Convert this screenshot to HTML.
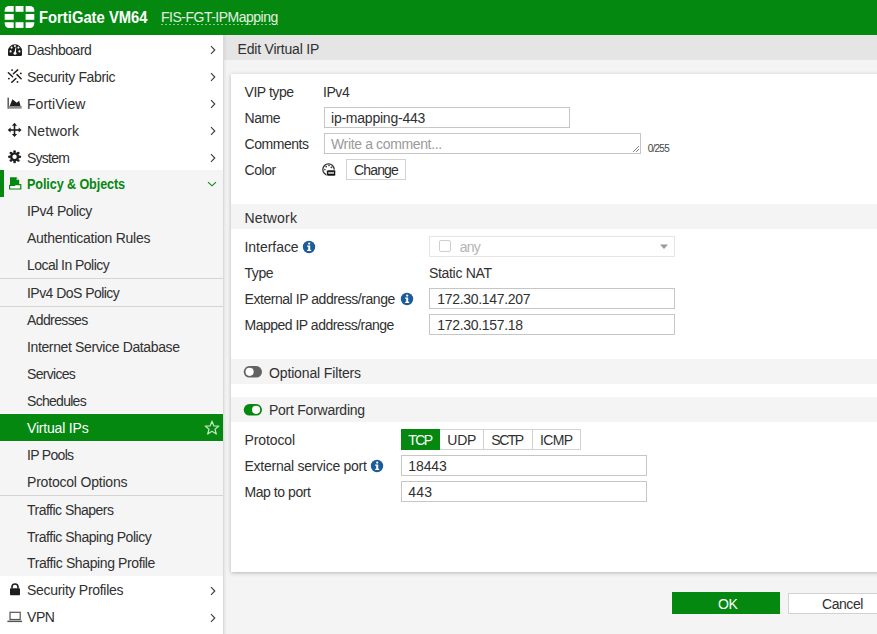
<!DOCTYPE html><html><head><meta charset="utf-8"><style>body{margin:0;width:877px;height:634px;overflow:hidden;position:relative;font-family:'Liberation Sans', sans-serif;}</style></head><body><div style="position:absolute;left:0px;top:0px;width:877px;height:634px;background:#f4f4f4"></div>
<div style="position:absolute;left:0px;top:0px;width:877px;height:35px;background:#04880f"></div>
<svg style="position:absolute;left:0px;top:0px" width="40" height="35" viewBox="0 0 40 35"><g fill="#fff">
<path d="M9 6 H13.7 V11.8 H4.7 V10.3 A4.3 4.3 0 0 1 9 6Z"/>
<rect x="15.5" y="6" width="8" height="5.8"/>
<path d="M25.6 6 H30 A4.3 4.3 0 0 1 34.3 10.3 V11.8 H25.6Z"/>
<rect x="4.7" y="14" width="9" height="5.8"/>
<rect x="25.6" y="14" width="8.7" height="5.8"/>
<path d="M4.7 22.2 H13.7 V27.9 H9 A4.3 4.3 0 0 1 4.7 23.6Z"/>
<rect x="15.5" y="22.2" width="8" height="5.7"/>
<path d="M25.6 22.2 H34.3 V23.6 A4.3 4.3 0 0 1 30 27.9 H25.6Z"/>
</g></svg>
<div style="position:absolute;left:39px;top:10px;font-size:16px;line-height:16px;color:#fff;font-weight:bold;letter-spacing:0px;white-space:nowrap;transform:scaleX(0.925);transform-origin:0 0;">FortiGate VM64</div>
<div style="position:absolute;left:161px;top:10px;font-size:14px;line-height:14px;color:#e3f1e3;font-weight:normal;letter-spacing:-0.5px;white-space:nowrap;">FIS-FGT-IPMapping</div>
<div style="position:absolute;left:161px;top:24px;width:117px;height:1px;background:repeating-linear-gradient(to right,rgba(255,255,255,0.55) 0 2px,transparent 2px 4px)"></div>
<div style="position:absolute;left:0px;top:35px;width:223px;height:599px;background:#fff"></div>
<div style="position:absolute;left:223px;top:35px;width:1px;height:599px;background:#dadada"></div>
<div style="position:absolute;left:0px;top:170px;width:223px;height:406px;background:#f5f5f5"></div>
<div style="position:absolute;left:0px;top:170px;width:4px;height:27px;background:#04880f"></div>
<div style="position:absolute;left:0px;top:278px;width:223px;height:1px;background:#d4d4d4"></div>
<div style="position:absolute;left:0px;top:306px;width:223px;height:1px;background:#d4d4d4"></div>
<div style="position:absolute;left:0px;top:495px;width:223px;height:1px;background:#d4d4d4"></div>
<div style="position:absolute;left:0px;top:413px;width:223px;height:1px;background:#fff"></div>
<div style="position:absolute;left:0px;top:414px;width:223px;height:27px;background:#04880f"></div>
<div style="position:absolute;left:0px;top:441px;width:223px;height:1px;background:#fff"></div>
<div style="position:absolute;left:27px;top:43px;font-size:14px;line-height:14px;color:#303030;font-weight:normal;letter-spacing:-0.45px;white-space:nowrap;">Dashboard</div>
<div style="position:absolute;left:27px;top:70px;font-size:14px;line-height:14px;color:#303030;font-weight:normal;letter-spacing:-0.34px;white-space:nowrap;">Security Fabric</div>
<div style="position:absolute;left:27px;top:97px;font-size:14px;line-height:14px;color:#303030;font-weight:normal;letter-spacing:0.04px;white-space:nowrap;">FortiView</div>
<div style="position:absolute;left:27px;top:124px;font-size:14px;line-height:14px;color:#303030;font-weight:normal;letter-spacing:0.12px;white-space:nowrap;">Network</div>
<div style="position:absolute;left:27px;top:151px;font-size:14px;line-height:14px;color:#303030;font-weight:normal;letter-spacing:-0.77px;white-space:nowrap;">System</div>
<div style="position:absolute;left:27px;top:177px;font-size:14px;line-height:14px;color:#04880f;font-weight:bold;letter-spacing:-0.1px;white-space:nowrap;transform:scaleX(0.9);transform-origin:0 0;">Policy &amp; Objects</div>
<div style="position:absolute;left:27px;top:204px;font-size:14px;line-height:14px;color:#303030;font-weight:normal;letter-spacing:-0.4px;white-space:nowrap;">IPv4 Policy</div>
<div style="position:absolute;left:27px;top:231px;font-size:14px;line-height:14px;color:#303030;font-weight:normal;letter-spacing:-0.26px;white-space:nowrap;">Authentication Rules</div>
<div style="position:absolute;left:27px;top:258px;font-size:14px;line-height:14px;color:#303030;font-weight:normal;letter-spacing:-0.54px;white-space:nowrap;">Local In Policy</div>
<div style="position:absolute;left:27px;top:286px;font-size:14px;line-height:14px;color:#303030;font-weight:normal;letter-spacing:-0.54px;white-space:nowrap;">IPv4 DoS Policy</div>
<div style="position:absolute;left:27px;top:313px;font-size:14px;line-height:14px;color:#303030;font-weight:normal;letter-spacing:-0.61px;white-space:nowrap;">Addresses</div>
<div style="position:absolute;left:27px;top:340px;font-size:14px;line-height:14px;color:#303030;font-weight:normal;letter-spacing:-0.37px;white-space:nowrap;">Internet Service Database</div>
<div style="position:absolute;left:27px;top:367px;font-size:14px;line-height:14px;color:#303030;font-weight:normal;letter-spacing:-0.69px;white-space:nowrap;">Services</div>
<div style="position:absolute;left:27px;top:394px;font-size:14px;line-height:14px;color:#303030;font-weight:normal;letter-spacing:-0.71px;white-space:nowrap;">Schedules</div>
<div style="position:absolute;left:27px;top:448px;font-size:14px;line-height:14px;color:#303030;font-weight:normal;letter-spacing:-0.69px;white-space:nowrap;">IP Pools</div>
<div style="position:absolute;left:27px;top:475px;font-size:14px;line-height:14px;color:#303030;font-weight:normal;letter-spacing:-0.2px;white-space:nowrap;">Protocol Options</div>
<div style="position:absolute;left:27px;top:503px;font-size:14px;line-height:14px;color:#303030;font-weight:normal;letter-spacing:-0.51px;white-space:nowrap;">Traffic Shapers</div>
<div style="position:absolute;left:27px;top:530px;font-size:14px;line-height:14px;color:#303030;font-weight:normal;letter-spacing:-0.47px;white-space:nowrap;">Traffic Shaping Policy</div>
<div style="position:absolute;left:27px;top:556px;font-size:14px;line-height:14px;color:#303030;font-weight:normal;letter-spacing:-0.39px;white-space:nowrap;">Traffic Shaping Profile</div>
<div style="position:absolute;left:27px;top:421px;font-size:14px;line-height:14px;color:#fff;font-weight:normal;letter-spacing:-0.19px;white-space:nowrap;">Virtual IPs</div>
<div style="position:absolute;left:27px;top:583px;font-size:14px;line-height:14px;color:#303030;font-weight:normal;letter-spacing:-0.29px;white-space:nowrap;">Security Profiles</div>
<div style="position:absolute;left:27px;top:610px;font-size:14px;line-height:14px;color:#303030;font-weight:normal;letter-spacing:-0.45px;white-space:nowrap;">VPN</div>
<svg style="position:absolute;left:207px;top:44px" width="12" height="12" viewBox="0 0 12 12"><path d="M4 2.2 L7.8 6 L4 9.8" fill="none" stroke="#3a3a3a" stroke-width="1.1"/></svg>
<svg style="position:absolute;left:207px;top:71px" width="12" height="12" viewBox="0 0 12 12"><path d="M4 2.2 L7.8 6 L4 9.8" fill="none" stroke="#3a3a3a" stroke-width="1.1"/></svg>
<svg style="position:absolute;left:207px;top:98px" width="12" height="12" viewBox="0 0 12 12"><path d="M4 2.2 L7.8 6 L4 9.8" fill="none" stroke="#3a3a3a" stroke-width="1.1"/></svg>
<svg style="position:absolute;left:207px;top:125px" width="12" height="12" viewBox="0 0 12 12"><path d="M4 2.2 L7.8 6 L4 9.8" fill="none" stroke="#3a3a3a" stroke-width="1.1"/></svg>
<svg style="position:absolute;left:207px;top:152px" width="12" height="12" viewBox="0 0 12 12"><path d="M4 2.2 L7.8 6 L4 9.8" fill="none" stroke="#3a3a3a" stroke-width="1.1"/></svg>
<svg style="position:absolute;left:207px;top:585px" width="12" height="12" viewBox="0 0 12 12"><path d="M4 2.2 L7.8 6 L4 9.8" fill="none" stroke="#3a3a3a" stroke-width="1.1"/></svg>
<svg style="position:absolute;left:207px;top:612px" width="12" height="12" viewBox="0 0 12 12"><path d="M4 2.2 L7.8 6 L4 9.8" fill="none" stroke="#3a3a3a" stroke-width="1.1"/></svg>
<svg style="position:absolute;left:205px;top:177px" width="14" height="14" viewBox="0 0 14 14"><path d="M3 5.1 L7 8.8 L11 5.1" fill="none" stroke="#04880f" stroke-width="1.15"/></svg>
<svg style="position:absolute;left:203px;top:419px" width="18" height="17" viewBox="0 0 18 17"><path d="M9 2.2 L10.9 6.9 L15.8 7.1 L12 10.3 L13.3 15 L9 12.3 L4.7 15 L6 10.3 L2.2 7.1 L7.1 6.9Z" fill="none" stroke="rgba(255,255,255,0.75)" stroke-width="1.3" stroke-linejoin="round"/></svg>
<svg style="position:absolute;left:0px;top:35px" width="30" height="27" viewBox="0 0 30 27"><path d="M8 16.2 A7 7 0 0 1 22 16.2 V19.8 Q22 21 20.8 21 H9.2 Q8 21 8 19.8Z" fill="#1e1e1e"/>
<g fill="#fff"><circle cx="10.6" cy="16.4" r="1.05"/><circle cx="11.6" cy="12.6" r="1.05"/><circle cx="14.9" cy="11" r="1.05"/><circle cx="18.4" cy="12.6" r="1.05"/><circle cx="19.4" cy="16.4" r="1.05"/>
<circle cx="15" cy="18.3" r="1.5"/><path d="M14.2 18.2 L15.6 12.3 L16.3 12.4 L15.8 18.4Z"/></g></svg>
<svg style="position:absolute;left:0px;top:62px" width="30" height="27" viewBox="0 0 30 27"><g stroke="#1e1e1e" stroke-width="1.5" stroke-linecap="round" fill="none">
<path d="M13.4 11.7 L17.7 7.9"/><path d="M8.4 10.8 L12.6 14.8"/><path d="M17 12.6 L21.1 16.7"/><path d="M11.8 20.3 L15.9 16.5"/></g>
<g fill="#1e1e1e"><circle cx="12.1" cy="8.1" r="0.95"/><circle cx="20.8" cy="11.4" r="0.95"/><circle cx="8.9" cy="16.6" r="0.95"/><circle cx="17.5" cy="19.9" r="0.95"/></g></svg>
<svg style="position:absolute;left:0px;top:89px" width="30" height="27" viewBox="0 0 30 27"><rect x="7.6" y="8.6" width="1.1" height="11.1" fill="#1e1e1e"/>
<rect x="8.6" y="17" width="13.1" height="2.7" fill="#8a8a8a"/>
<path d="M9.7 17 L12.4 10.2 L16.7 13.8 L19.2 11.8 L20.5 17Z" fill="#1e1e1e"/></svg>
<svg style="position:absolute;left:0px;top:116px" width="30" height="27" viewBox="0 0 30 27"><g fill="#1e1e1e"><rect x="9" y="13.2" width="11" height="1.6"/><rect x="13.7" y="8.5" width="1.6" height="11"/>
<path d="M7.7 14 L10.6 11.4 L10.6 16.6Z"/><path d="M21.6 14 L18.7 11.4 L18.7 16.6Z"/>
<path d="M14.5 6.8 L11.9 9.7 L17.1 9.7Z"/><path d="M14.5 21 L11.9 18.1 L17.1 18.1Z"/></g></svg>
<svg style="position:absolute;left:0px;top:143px" width="30" height="27" viewBox="0 0 30 27"><g fill="#1e1e1e"><circle cx="19.80" cy="13.80" r="1.35"/><circle cx="18.28" cy="17.48" r="1.35"/><circle cx="14.60" cy="19.00" r="1.35"/><circle cx="10.92" cy="17.48" r="1.35"/><circle cx="9.40" cy="13.80" r="1.35"/><circle cx="10.92" cy="10.12" r="1.35"/><circle cx="14.60" cy="8.60" r="1.35"/><circle cx="18.28" cy="10.12" r="1.35"/></g><circle cx="14.6" cy="13.8" r="3.4" fill="none" stroke="#1e1e1e" stroke-width="2.4"/></svg>
<svg style="position:absolute;left:0px;top:170px" width="30" height="27" viewBox="0 0 30 27"><path d="M10 7.3 H16.6 L19.2 9.9 V15 H10Z" fill="#04880f"/><path d="M16.6 7.3 V9.9 H19.2Z" fill="#cfe6cf"/>
<path d="M9.6 15.4 H14.6 L15.6 14.6 H20.8 V19 H9.6Z" fill="#fff" stroke="#04880f" stroke-width="1.2" stroke-linejoin="round"/></svg>
<svg style="position:absolute;left:0px;top:577px" width="30" height="27" viewBox="0 0 30 27"><path d="M12 11.5 V10 A3 3 0 0 1 18 10 V11.5" fill="none" stroke="#1e1e1e" stroke-width="1.6"/>
<rect x="10" y="11.3" width="10" height="6.9" rx="0.8" fill="#1e1e1e"/></svg>
<svg style="position:absolute;left:0px;top:604px" width="30" height="27" viewBox="0 0 30 27"><rect x="10" y="8.3" width="10.2" height="7.2" fill="none" stroke="#555" stroke-width="1.2"/>
<rect x="7.4" y="16.6" width="14.6" height="1.5" fill="#555"/></svg>
<div style="position:absolute;left:224px;top:35px;width:653px;height:25px;background:#e5e5e5"></div>
<div style="position:absolute;left:224px;top:35px;width:3px;height:599px;background:linear-gradient(to right,rgba(0,0,0,0.06),rgba(0,0,0,0))"></div>
<div style="position:absolute;left:237.5px;top:42px;font-size:14px;line-height:14px;color:#303030;font-weight:normal;letter-spacing:-0.2px;white-space:nowrap;">Edit Virtual IP</div>
<div style="position:absolute;left:231px;top:74px;width:660px;height:498px;background:#fff;box-shadow:0 1px 4px rgba(0,0,0,0.26)"></div>
<div style="position:absolute;left:244.5px;top:85px;font-size:14px;line-height:14px;color:#303030;font-weight:normal;letter-spacing:-0.45px;white-space:nowrap;">VIP type</div>
<div style="position:absolute;left:323px;top:85px;font-size:14px;line-height:14px;color:#303030;font-weight:normal;letter-spacing:-0.45px;white-space:nowrap;">IPv4</div>
<div style="position:absolute;left:244.5px;top:111px;font-size:14px;line-height:14px;color:#303030;font-weight:normal;letter-spacing:-0.45px;white-space:nowrap;">Name</div>
<div style="position:absolute;left:324px;top:107px;width:244px;height:19px;background:#fff;border:1px solid #c6c6c6;"></div>
<div style="position:absolute;left:331px;top:111px;font-size:14px;line-height:14px;color:#303030;font-weight:normal;letter-spacing:-0.23px;white-space:nowrap;">ip-mapping-443</div>
<div style="position:absolute;left:244.5px;top:137px;font-size:14px;line-height:14px;color:#303030;font-weight:normal;letter-spacing:-0.45px;white-space:nowrap;">Comments</div>
<div style="position:absolute;left:324px;top:133px;width:315px;height:19px;background:#fff;border:1px solid #c6c6c6;"></div>
<div style="position:absolute;left:331px;top:137px;font-size:14px;line-height:14px;color:#9a9a9a;font-weight:normal;letter-spacing:-0.36px;white-space:nowrap;">Write a comment...</div>
<svg style="position:absolute;left:630px;top:143px" width="10" height="10" viewBox="0 0 10 10"><path d="M9 3 L3 9 M9 6 L6 9" stroke="#777" stroke-width="0.9"/></svg>
<div style="position:absolute;left:647.7px;top:144px;font-size:10px;line-height:10px;color:#444;font-weight:normal;letter-spacing:-0.75px;white-space:nowrap;">0/255</div>
<div style="position:absolute;left:244.5px;top:163px;font-size:14px;line-height:14px;color:#303030;font-weight:normal;letter-spacing:-0.45px;white-space:nowrap;">Color</div>
<svg style="position:absolute;left:320px;top:161px" width="18" height="17" viewBox="0 0 18 17"><circle cx="8.5" cy="8.5" r="5.7" fill="none" stroke="#333" stroke-width="1.3"/>
<circle cx="6.2" cy="5.6" r="0.9" fill="#333"/><circle cx="9" cy="4.6" r="0.8" fill="#333"/><circle cx="11.4" cy="6.3" r="0.9" fill="#333"/><circle cx="4.9" cy="8.6" r="0.8" fill="#333"/>
<rect x="6.6" y="8.9" width="9" height="6.2" rx="1.4" fill="#111" stroke="#fff" stroke-width="0.7"/><rect x="8.2" y="10.9" width="5.8" height="2" fill="#bbb"/></svg>
<div style="position:absolute;left:346px;top:159px;width:58px;height:19px;background:#fff;border:1px solid #d2d2d2;"></div>
<div style="position:absolute;left:354px;top:163px;font-size:14px;line-height:14px;color:#303030;font-weight:normal;letter-spacing:-0.85px;white-space:nowrap;">Change</div>
<div style="position:absolute;left:231px;top:204px;width:646px;height:25px;background:#f4f4f4"></div>
<div style="position:absolute;left:244.5px;top:211px;font-size:14px;line-height:14px;color:#303030;font-weight:normal;letter-spacing:0.18px;white-space:nowrap;">Network</div>
<div style="position:absolute;left:244.5px;top:240px;font-size:14px;line-height:14px;color:#303030;font-weight:normal;letter-spacing:-0.04px;white-space:nowrap;">Interface</div>
<svg style="position:absolute;left:302px;top:240px" width="14" height="14" viewBox="0 0 14 14"><circle cx="7" cy="7" r="6.2" fill="#1c5c98"/><circle cx="7.2" cy="3.6" r="1.15" fill="#fff"/><path d="M5.1 5.5 H8.2 V9.7 H9.2 V10.9 H5.2 V9.7 H6.2 V6.7 H5.1Z" fill="#fff"/></svg>
<div style="position:absolute;left:429px;top:236px;width:244px;height:19px;background:#fff;border:1px solid #e6e6e6;"></div>
<div style="position:absolute;left:439px;top:240px;width:10px;height:10px;border:1px solid #cfcfcf;border-radius:2px;background:#fff"></div>
<div style="position:absolute;left:459.7px;top:240px;font-size:14px;line-height:14px;color:#b4b4b4;font-weight:normal;letter-spacing:-0.7px;white-space:nowrap;">any</div>
<svg style="position:absolute;left:659px;top:243px" width="10" height="7" viewBox="0 0 10 7"><path d="M1 1.5 H9 L5 6Z" fill="#9a9a9a"/></svg>
<div style="position:absolute;left:244.5px;top:266px;font-size:14px;line-height:14px;color:#303030;font-weight:normal;letter-spacing:-0.45px;white-space:nowrap;">Type</div>
<div style="position:absolute;left:429px;top:266px;font-size:14px;line-height:14px;color:#303030;font-weight:normal;letter-spacing:-0.32px;white-space:nowrap;">Static NAT</div>
<div style="position:absolute;left:244.5px;top:292px;font-size:14px;line-height:14px;color:#303030;font-weight:normal;letter-spacing:-0.45px;white-space:nowrap;">External IP address/range</div>
<svg style="position:absolute;left:400px;top:292px" width="14" height="14" viewBox="0 0 14 14"><circle cx="7" cy="7" r="6.2" fill="#1c5c98"/><circle cx="7.2" cy="3.6" r="1.15" fill="#fff"/><path d="M5.1 5.5 H8.2 V9.7 H9.2 V10.9 H5.2 V9.7 H6.2 V6.7 H5.1Z" fill="#fff"/></svg>
<div style="position:absolute;left:429px;top:288px;width:244px;height:19px;background:#fff;border:1px solid #c6c6c6;"></div>
<div style="position:absolute;left:437.3px;top:292px;font-size:14px;line-height:14px;color:#303030;font-weight:normal;letter-spacing:-0.32px;white-space:nowrap;">172.30.147.207</div>
<div style="position:absolute;left:244.5px;top:318px;font-size:14px;line-height:14px;color:#303030;font-weight:normal;letter-spacing:-0.5px;white-space:nowrap;">Mapped IP address/range</div>
<div style="position:absolute;left:429px;top:314px;width:244px;height:19px;background:#fff;border:1px solid #c6c6c6;"></div>
<div style="position:absolute;left:437.3px;top:318px;font-size:14px;line-height:14px;color:#303030;font-weight:normal;letter-spacing:-0.32px;white-space:nowrap;">172.30.157.18</div>
<div style="position:absolute;left:231px;top:359px;width:646px;height:25px;background:#f4f4f4"></div>
<svg style="position:absolute;left:243px;top:365px" width="20" height="14" viewBox="0 0 20 14"><rect x="0.7" y="1" width="18.3" height="11.6" rx="5.8" fill="#626262"/><circle cx="6.6" cy="6.8" r="4.1" fill="#fff"/></svg>
<div style="position:absolute;left:269px;top:366px;font-size:14px;line-height:14px;color:#303030;font-weight:normal;letter-spacing:-0.14px;white-space:nowrap;">Optional Filters</div>
<div style="position:absolute;left:231px;top:397px;width:646px;height:25px;background:#f4f4f4"></div>
<svg style="position:absolute;left:243px;top:403px" width="20" height="14" viewBox="0 0 20 14"><rect x="0.7" y="1" width="18.3" height="11.6" rx="5.8" fill="#04880f"/><circle cx="13.1" cy="6.8" r="4.1" fill="#fff"/></svg>
<div style="position:absolute;left:269px;top:403px;font-size:14px;line-height:14px;color:#303030;font-weight:normal;letter-spacing:-0.25px;white-space:nowrap;">Port Forwarding</div>
<div style="position:absolute;left:244.5px;top:433px;font-size:14px;line-height:14px;color:#303030;font-weight:normal;letter-spacing:-0.11px;white-space:nowrap;">Protocol</div>
<div style="position:absolute;left:401px;top:429px;width:178px;height:19px;border:1px solid #d2d2d2;background:#fff"></div>
<div style="position:absolute;left:483px;top:429px;width:1px;height:21px;background:#d2d2d2"></div>
<div style="position:absolute;left:532px;top:429px;width:1px;height:21px;background:#d2d2d2"></div>
<div style="position:absolute;left:401px;top:429px;width:39px;height:21px;background:#04880f"></div>
<div style="position:absolute;left:408.3px;top:433px;font-size:14px;line-height:14px;color:#fff;font-weight:normal;letter-spacing:-1.55px;white-space:nowrap;">TCP</div>
<div style="position:absolute;left:447.3px;top:433px;font-size:14px;line-height:14px;color:#303030;font-weight:normal;letter-spacing:-0.25px;white-space:nowrap;">UDP</div>
<div style="position:absolute;left:491.3px;top:433px;font-size:14px;line-height:14px;color:#303030;font-weight:normal;letter-spacing:-1.5px;white-space:nowrap;">SCTP</div>
<div style="position:absolute;left:540px;top:433px;font-size:14px;line-height:14px;color:#303030;font-weight:normal;letter-spacing:-0.6px;white-space:nowrap;">ICMP</div>
<div style="position:absolute;left:244.5px;top:459px;font-size:14px;line-height:14px;color:#303030;font-weight:normal;letter-spacing:-0.26px;white-space:nowrap;">External service port</div>
<svg style="position:absolute;left:370px;top:459px" width="14" height="14" viewBox="0 0 14 14"><circle cx="7" cy="7" r="6.2" fill="#1c5c98"/><circle cx="7.2" cy="3.6" r="1.15" fill="#fff"/><path d="M5.1 5.5 H8.2 V9.7 H9.2 V10.9 H5.2 V9.7 H6.2 V6.7 H5.1Z" fill="#fff"/></svg>
<div style="position:absolute;left:401px;top:455px;width:244px;height:19px;background:#fff;border:1px solid #c6c6c6;"></div>
<div style="position:absolute;left:408.3px;top:459px;font-size:14px;line-height:14px;color:#303030;font-weight:normal;letter-spacing:-0.1px;white-space:nowrap;">18443</div>
<div style="position:absolute;left:244.5px;top:485px;font-size:14px;line-height:14px;color:#303030;font-weight:normal;letter-spacing:-0.45px;white-space:nowrap;">Map to port</div>
<div style="position:absolute;left:401px;top:481px;width:244px;height:19px;background:#fff;border:1px solid #c6c6c6;"></div>
<div style="position:absolute;left:408.3px;top:485px;font-size:14px;line-height:14px;color:#303030;font-weight:normal;letter-spacing:0.25px;white-space:nowrap;">443</div>
<div style="position:absolute;left:672px;top:592px;width:108px;height:22px;background:#04880f"></div>
<div style="position:absolute;left:718px;top:597px;font-size:14px;line-height:14px;color:#fff;font-weight:normal;letter-spacing:-0.45px;white-space:nowrap;">OK</div>
<div style="position:absolute;left:788px;top:593px;width:98px;height:19px;background:#fff;border:1px solid #d2d2d2;"></div>
<div style="position:absolute;left:822px;top:597px;font-size:14px;line-height:14px;color:#303030;font-weight:normal;letter-spacing:-0.45px;white-space:nowrap;">Cancel</div></body></html>
